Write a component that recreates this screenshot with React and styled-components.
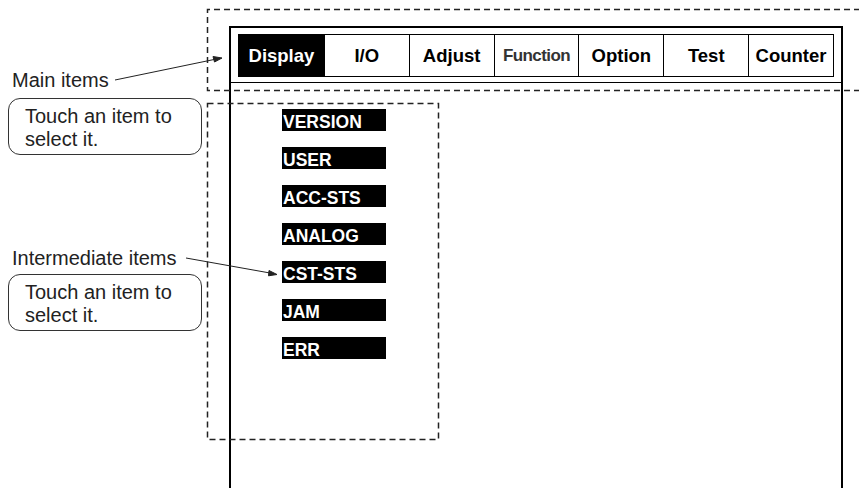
import React from "react";
import styled, { createGlobalStyle } from "styled-components";

const Global = createGlobalStyle`
  html, body { margin: 0; padding: 0; background: #fff; }
  body { font-family: "Liberation Sans", Arial, sans-serif; }
`;

const Page = styled.div`
  position: relative;
  width: 859px;
  height: 488px;
  overflow: hidden;
  display: flex;
  align-items: flex-start;
  background: #fff;
`;

const Notes = styled.div`
  width: 221px;
  padding-left: 8px;
  display: flex;
  flex-direction: column;
  flex-shrink: 0;
`;

const Label = styled.div`
  font-size: 20px;
  line-height: 23px;
  color: #222;
  padding-left: 4px;
  margin-top: ${(p) => p.$top}px;
  margin-bottom: ${(p) => p.$gap}px;
  white-space: nowrap;
`;

const Callout = styled.div`
  width: 194px;
  height: 57px;
  border: 1px solid #333;
  border-radius: 12px;
  padding: 6px 0 0 16px;
  box-sizing: border-box;
  font-size: 20px;
  line-height: 23px;
  color: #222;
  white-space: nowrap;
`;

const Screen = styled.div`
  margin-top: 26px;
  width: 614px;
  height: 480px;
  box-sizing: border-box;
  border: 2px solid #000;
  border-bottom: none;
  display: flex;
  flex-direction: column;
  flex-shrink: 0;
`;

const Header = styled.div`
  padding: 6px 7px 5px 7px;
  border-bottom: 1.5px solid #000;
`;

const TabBar = styled.div`
  display: grid;
  grid-template-columns: repeat(7, 1fr);
  height: 43px;
  box-sizing: border-box;
  border: 1px solid #000;
`;

const Tab = styled.div`
  display: flex;
  align-items: center;
  justify-content: center;
  border-left: ${(p) => (p.$first ? "none" : "1px solid #000")};
  background: ${(p) => (p.$active ? "#000" : "#fff")};
  color: ${(p) => (p.$active ? "#fff" : p.$muted ? "#333" : "#000")};
  font-weight: 700;
  font-size: ${(p) => (p.$muted ? "17px" : "18.5px")};
  letter-spacing: ${(p) => (p.$muted ? "-0.6px" : "0")};
  white-space: nowrap;
`;

const Menu = styled.div`
  display: flex;
  flex-direction: column;
  gap: 16px;
  padding: 26px 0 0 51px;
`;

const MenuItem = styled.div`
  width: 104px;
  height: 22px;
  background: #000;
  color: #fff;
  font-weight: 700;
  font-size: 17.5px;
  line-height: 26px;
  padding-left: 1px;
  box-sizing: border-box;
  overflow: hidden;
  white-space: nowrap;
`;

const Overlay = styled.svg`
  position: absolute;
  left: 0;
  top: 0;
  width: 859px;
  height: 488px;
  pointer-events: none;
`;

const tabs = ["Display", "I/O", "Adjust", "Function", "Option", "Test", "Counter"];
const items = ["VERSION", "USER", "ACC-STS", "ANALOG", "CST-STS", "JAM", "ERR"];

export default function App() {
  return (
    <>
      <Global />
      <Page>
        <Notes>
          <Label $top={69} $gap={6}>Main items</Label>
          <Callout>
            Touch an item to
            <br />
            select it.
          </Callout>
          <Label $top={92} $gap={4}>Intermediate items</Label>
          <Callout>
            Touch an item to
            <br />
            select it.
          </Callout>
        </Notes>
        <Screen>
          <Header>
            <TabBar>
              {tabs.map((t, i) => (
                <Tab key={t} $first={i === 0} $active={i === 0} $muted={t === "Function"}>
                  {t}
                </Tab>
              ))}
            </TabBar>
          </Header>
          <Menu>
            {items.map((it) => (
              <MenuItem key={it}>{it}</MenuItem>
            ))}
          </Menu>
        </Screen>
        <Overlay viewBox="0 0 859 488">
          <g fill="none" stroke="#222" strokeWidth="1.5" strokeDasharray="6 4">
            <path d="M870 9.5 H207.5 V90.5 H870" />
            <rect x="207.5" y="103.5" width="231" height="336" />
          </g>
          <g stroke="#222" strokeWidth="1" fill="#222">
            <line x1="115" y1="80" x2="214" y2="59.5" />
            <polygon points="222,58 213,56.5 214.5,62" />
            <line x1="186" y1="258" x2="270" y2="273" />
            <polygon points="277,274.5 269,270.5 268.5,275.8" />
          </g>
        </Overlay>
      </Page>
    </>
  );
}
